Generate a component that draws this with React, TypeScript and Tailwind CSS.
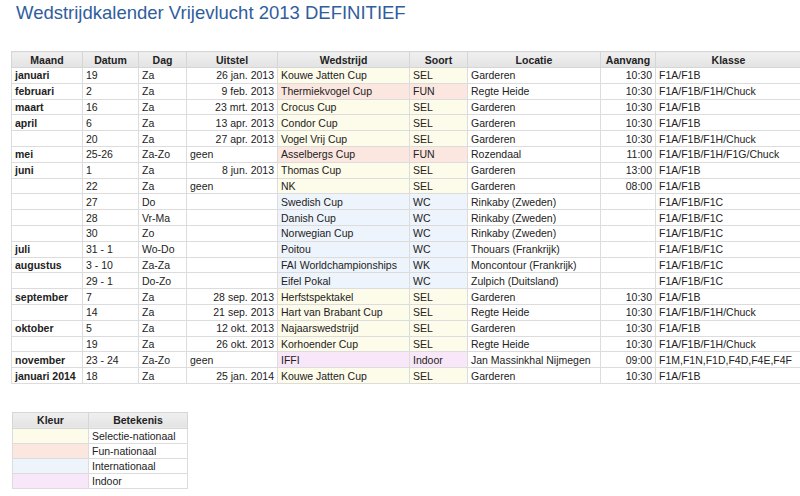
import React from "react";

type Soort = "SEL" | "FUN" | "WC" | "WK" | "Indoor";

interface Wedstrijd {
  maand: string;
  datum: string;
  dag: string;
  uitstel: string;
  naam: string;
  soort: Soort;
  locatie: string;
  aanvang: string;
  klasse: string;
}

const kalender: Wedstrijd[] = [
  { maand: "januari", datum: "19", dag: "Za", uitstel: "26 jan. 2013", naam: "Kouwe Jatten Cup", soort: "SEL", locatie: "Garderen", aanvang: "10:30", klasse: "F1A/F1B" },
  { maand: "februari", datum: "2", dag: "Za", uitstel: "9 feb. 2013", naam: "Thermiekvogel Cup", soort: "FUN", locatie: "Regte Heide", aanvang: "10:30", klasse: "F1A/F1B/F1H/Chuck" },
  { maand: "maart", datum: "16", dag: "Za", uitstel: "23 mrt. 2013", naam: "Crocus Cup", soort: "SEL", locatie: "Garderen", aanvang: "10:30", klasse: "F1A/F1B" },
  { maand: "april", datum: "6", dag: "Za", uitstel: "13 apr. 2013", naam: "Condor Cup", soort: "SEL", locatie: "Garderen", aanvang: "10:30", klasse: "F1A/F1B" },
  { maand: "", datum: "20", dag: "Za", uitstel: "27 apr. 2013", naam: "Vogel Vrij Cup", soort: "SEL", locatie: "Garderen", aanvang: "10:30", klasse: "F1A/F1B/F1H/Chuck" },
  { maand: "mei", datum: "25-26", dag: "Za-Zo", uitstel: "geen", naam: "Asselbergs Cup", soort: "FUN", locatie: "Rozendaal", aanvang: "11:00", klasse: "F1A/F1B/F1H/F1G/Chuck" },
  { maand: "juni", datum: "1", dag: "Za", uitstel: "8 jun. 2013", naam: "Thomas Cup", soort: "SEL", locatie: "Garderen", aanvang: "13:00", klasse: "F1A/F1B" },
  { maand: "", datum: "22", dag: "Za", uitstel: "geen", naam: "NK", soort: "SEL", locatie: "Garderen", aanvang: "08:00", klasse: "F1A/F1B" },
  { maand: "", datum: "27", dag: "Do", uitstel: "", naam: "Swedish Cup", soort: "WC", locatie: "Rinkaby (Zweden)", aanvang: "", klasse: "F1A/F1B/F1C" },
  { maand: "", datum: "28", dag: "Vr-Ma", uitstel: "", naam: "Danish Cup", soort: "WC", locatie: "Rinkaby (Zweden)", aanvang: "", klasse: "F1A/F1B/F1C" },
  { maand: "", datum: "30", dag: "Zo", uitstel: "", naam: "Norwegian Cup", soort: "WC", locatie: "Rinkaby (Zweden)", aanvang: "", klasse: "F1A/F1B/F1C" },
  { maand: "juli", datum: "31 - 1", dag: "Wo-Do", uitstel: "", naam: "Poitou", soort: "WC", locatie: "Thouars (Frankrijk)", aanvang: "", klasse: "F1A/F1B/F1C" },
  { maand: "augustus", datum: "3 - 10", dag: "Za-Za", uitstel: "", naam: "FAI Worldchampionships", soort: "WK", locatie: "Moncontour (Frankrijk)", aanvang: "", klasse: "F1A/F1B/F1C" },
  { maand: "", datum: "29 - 1", dag: "Do-Zo", uitstel: "", naam: "Eifel Pokal", soort: "WC", locatie: "Zulpich (Duitsland)", aanvang: "", klasse: "F1A/F1B/F1C" },
  { maand: "september", datum: "7", dag: "Za", uitstel: "28 sep. 2013", naam: "Herfstspektakel", soort: "SEL", locatie: "Garderen", aanvang: "10:30", klasse: "F1A/F1B" },
  { maand: "", datum: "14", dag: "Za", uitstel: "21 sep. 2013", naam: "Hart van Brabant Cup", soort: "SEL", locatie: "Regte Heide", aanvang: "10:30", klasse: "F1A/F1B/F1H/Chuck" },
  { maand: "oktober", datum: "5", dag: "Za", uitstel: "12 okt. 2013", naam: "Najaarswedstrijd", soort: "SEL", locatie: "Garderen", aanvang: "10:30", klasse: "F1A/F1B" },
  { maand: "", datum: "19", dag: "Za", uitstel: "26 okt. 2013", naam: "Korhoender Cup", soort: "SEL", locatie: "Regte Heide", aanvang: "10:30", klasse: "F1A/F1B/F1H/Chuck" },
  { maand: "november", datum: "23 - 24", dag: "Za-Zo", uitstel: "geen", naam: "IFFI", soort: "Indoor", locatie: "Jan Massinkhal Nijmegen", aanvang: "09:00", klasse: "F1M,F1N,F1D,F4D,F4E,F4F" },
  { maand: "januari 2014", datum: "18", dag: "Za", uitstel: "25 jan. 2014", naam: "Kouwe Jatten Cup", soort: "SEL", locatie: "Garderen", aanvang: "10:30", klasse: "F1A/F1B" },
];

// kleur per soort wedstrijd
const kleur: Record<Soort, string> = {
  SEL: "bg-[#fdfbe9]",
  FUN: "bg-[#fbe6e0]",
  WC: "bg-[#eef4fb]",
  WK: "bg-[#eef4fb]",
  Indoor: "bg-[#f8e7f8]",
};

const legenda: { soort: Soort; betekenis: string }[] = [
  { soort: "SEL", betekenis: "Selectie-nationaal" },
  { soort: "FUN", betekenis: "Fun-nationaal" },
  { soort: "WC", betekenis: "Internationaal" },
  { soort: "Indoor", betekenis: "Indoor" },
];

const th = "h-[16px] border border-[#d6d6d6] bg-gradient-to-b from-[#f0f0f0] to-[#e3e3e3] p-0 text-center font-bold leading-[14px] text-[#222]";
const td = "h-[15.8px] border border-[#dcdcdc] px-[3px] py-0 leading-[14px] whitespace-nowrap overflow-hidden";

export default function App() {
  return (
    <div className="min-h-[496px] w-[800px] overflow-hidden bg-white font-['Liberation_Sans',Arial,sans-serif] text-[#222]">
      <h1 className="pl-[16px] pt-[2px] text-[18.5px] leading-[22px] font-normal text-[#2f5d9e]">
        Wedstrijdkalender Vrijevlucht 2013 DEFINITIEF
      </h1>

      <table className="mt-[27px] ml-[11px] w-[790px] table-fixed border-collapse text-[10.5px]">
        <colgroup>
          <col className="w-[71px]" />
          <col className="w-[56px]" />
          <col className="w-[48px]" />
          <col className="w-[91px]" />
          <col className="w-[132px]" />
          <col className="w-[58px]" />
          <col className="w-[133px]" />
          <col className="w-[55px]" />
          <col className="w-[146px]" />
        </colgroup>
        <thead>
          <tr>
            <th className={th}>Maand</th>
            <th className={th}>Datum</th>
            <th className={th}>Dag</th>
            <th className={th}>Uitstel</th>
            <th className={th}>Wedstrijd</th>
            <th className={th}>Soort</th>
            <th className={th}>Locatie</th>
            <th className={th}>Aanvang</th>
            <th className={th}>Klasse</th>
          </tr>
        </thead>
        <tbody>
          {kalender.map((w, i) => (
            <tr key={i}>
              <td className={`${td} font-bold`}>{w.maand}</td>
              <td className={td}>{w.datum}</td>
              <td className={td}>{w.dag}</td>
              <td className={`${td} ${w.uitstel === "geen" ? "text-left" : "text-right"}`}>{w.uitstel}</td>
              <td className={`${td} ${kleur[w.soort]}`}>{w.naam}</td>
              <td className={`${td} ${kleur[w.soort]}`}>{w.soort}</td>
              <td className={td}>{w.locatie}</td>
              <td className={`${td} text-right`}>{w.aanvang}</td>
              <td className={td}>{w.klasse}</td>
            </tr>
          ))}
        </tbody>
      </table>

      <table className="mt-[28px] ml-[12px] w-[175px] table-fixed border-collapse text-[10.5px]">
        <colgroup>
          <col className="w-[76px]" />
          <col className="w-[99px]" />
        </colgroup>
        <thead>
          <tr>
            <th className={th}>Kleur</th>
            <th className={th}>Betekenis</th>
          </tr>
        </thead>
        <tbody>
          {legenda.map((l) => (
            <tr key={l.betekenis}>
              <td className={`${td} h-[15px] ${kleur[l.soort]}`}></td>
              <td className={`${td} h-[15px]`}>{l.betekenis}</td>
            </tr>
          ))}
        </tbody>
      </table>
    </div>
  );
}
